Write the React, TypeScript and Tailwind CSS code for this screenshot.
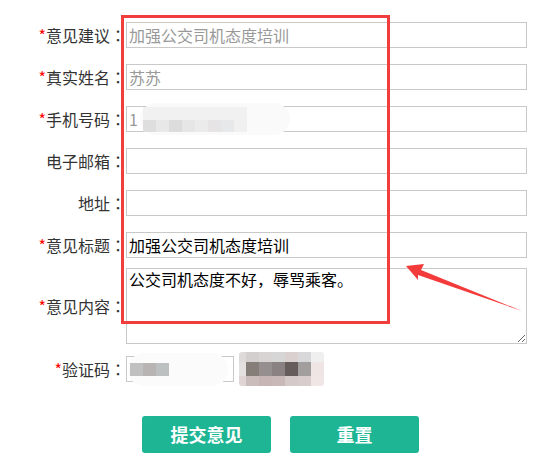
import React from "react";

function Label({ req, text }: { req?: boolean; text: string }) {
  return (
    <div className="w-[126px] shrink-0 text-right text-[16px] leading-none text-[#333]">
      {req && <span className="text-[#f00]">*</span>}
      {text}
      <span className="font-['Noto_Sans_CJK_JP',sans-serif]">：</span>
    </div>
  );
}

function Field({ value, dark }: { value?: string; dark?: boolean }) {
  return (
    <input
      readOnly
      value={value ?? ""}
      className={
        "h-[26px] w-[401px] border border-[#c9c9c9] bg-white px-[2px] text-[16px] outline-none " +
        (dark ? "text-black" : "text-[#999]")
      }
    />
  );
}

const phoneCells = ["#dedede", "#e8e8e8", "#dcdcdc", "#e6e6e6", "#ebebeb", "#e6e4e4", "#e6e8ea", "#f0f0f0"];
const captchaRows = [
  ["#dedada", "#d3cfcf", "#d8d4d4", "#d6d6d6", "#dbd0d0", "#d8d8db", "#efefef"],
  ["#e4e0e0", "#857d78", "#958f8f", "#8a8182", "#665c5c", "#a29e9e", "#efe5e5"],
  ["#e0d4d4", "#cbbcbc", "#c7b5b5", "#c8b8b8", "#d5c9c9", "#d9cccc", "#f0e6e6"],
];

export default function App() {
  return (
    <div className="relative h-[460px] w-[551px] overflow-hidden bg-white font-['Noto_Sans_CJK_SC','Microsoft_YaHei',sans-serif]">
      <div className="flex flex-col pt-[22px]">
        <div className="flex flex-col gap-4">
          <div className="flex items-center">
            <Label req text="意见建议" />
            <Field value="加强公交司机态度培训" />
          </div>
          <div className="flex items-center">
            <Label req text="真实姓名" />
            <Field value="苏苏" />
          </div>
          <div className="flex items-center">
            <Label req text="手机号码" />
            <div className="relative">
              <Field value="1" />
              {/* blurred-out number */}
              <div className="absolute left-[14px] top-[-3px] flex h-[32px] w-[150px] flex-col justify-center rounded-[16px] bg-[#fafafa] pl-[3px]">
                <div className="flex h-[13px] blur-[0.6px]">
                  {phoneCells.map((_, i) => (
                    <div key={i} className="h-full w-[13px] bg-[#f1f1f1]" />
                  ))}
                </div>
                <div className="flex h-[12px] blur-[0.6px]">
                  {phoneCells.map((c, i) => (
                    <div key={i} className="h-full w-[13px]" style={{ background: c }} />
                  ))}
                </div>
              </div>
            </div>
          </div>
          <div className="flex items-center">
            <Label text="电子邮箱" />
            <Field />
          </div>
          <div className="flex items-center">
            <Label text="地址" />
            <Field />
          </div>
          <div className="flex items-center">
            <Label req text="意见标题" />
            <Field value="加强公交司机态度培训" dark />
          </div>
        </div>

        <div className="mt-[10px] flex items-center">
          <Label req text="意见内容" />
          <textarea
            readOnly
            defaultValue="公交司机态度不好，辱骂乘客。"
            className="h-[76px] w-[401px] border border-[#c9c9c9] px-[2px] py-0 text-[16px] leading-[20px] text-black outline-none"
          />
        </div>

        <div className="mt-[8px] flex items-center">
          <Label req text="验证码" />
          <div className="relative">
            <input readOnly className="h-[26px] w-[108px] border border-[#c9c9c9] bg-white outline-none" />
            <div className="absolute left-[2px] top-[-3px] flex h-[33px] w-[100px] items-center rounded-[16px] bg-[#fbfbfb] pl-[2px]">
              <div className="flex h-[13px] blur-[0.5px]">
                <div className="h-full w-[13px] bg-[#c0c0c0]" />
                <div className="h-full w-[13px] bg-[#b8b4b4]" />
                <div className="h-full w-[13px] bg-[#bcc0c0]" />
              </div>
            </div>
          </div>
          <div className="ml-[5px] flex h-[34px] w-[85px] flex-col overflow-hidden rounded-[3px] blur-[0.5px]">
            {captchaRows.map((row, r) => (
              <div key={r} className={"flex " + (r === 1 ? "h-[14px]" : "h-[10px]")}>
                {row.map((c, i) => (
                  <div key={i} className={i === 0 ? "h-full w-[7px]" : "h-full w-[13px]"} style={{ background: c }} />
                ))}
              </div>
            ))}
          </div>
        </div>

        <div className="ml-[142px] mt-[30px] flex gap-[19px]">
          <button className="h-[37px] w-[129px] rounded-[3px] bg-[#1db594] text-[18px] font-bold text-white">
            提交意见
          </button>
          <button className="h-[37px] w-[129px] rounded-[3px] bg-[#1db594] text-[18px] font-bold text-white">
            重置
          </button>
        </div>
      </div>

      {/* annotation overlay */}
      <div className="pointer-events-none absolute left-[121px] top-[15px] h-[309px] w-[269px] border-[3px] border-[#f23d3d]" />
      <svg className="pointer-events-none absolute left-0 top-0" width="551" height="460">
        <polygon points="406,266 424,264 421,270 522,311 418,275 418,280" fill="#f43b3b" />
      </svg>
    </div>
  );
}
